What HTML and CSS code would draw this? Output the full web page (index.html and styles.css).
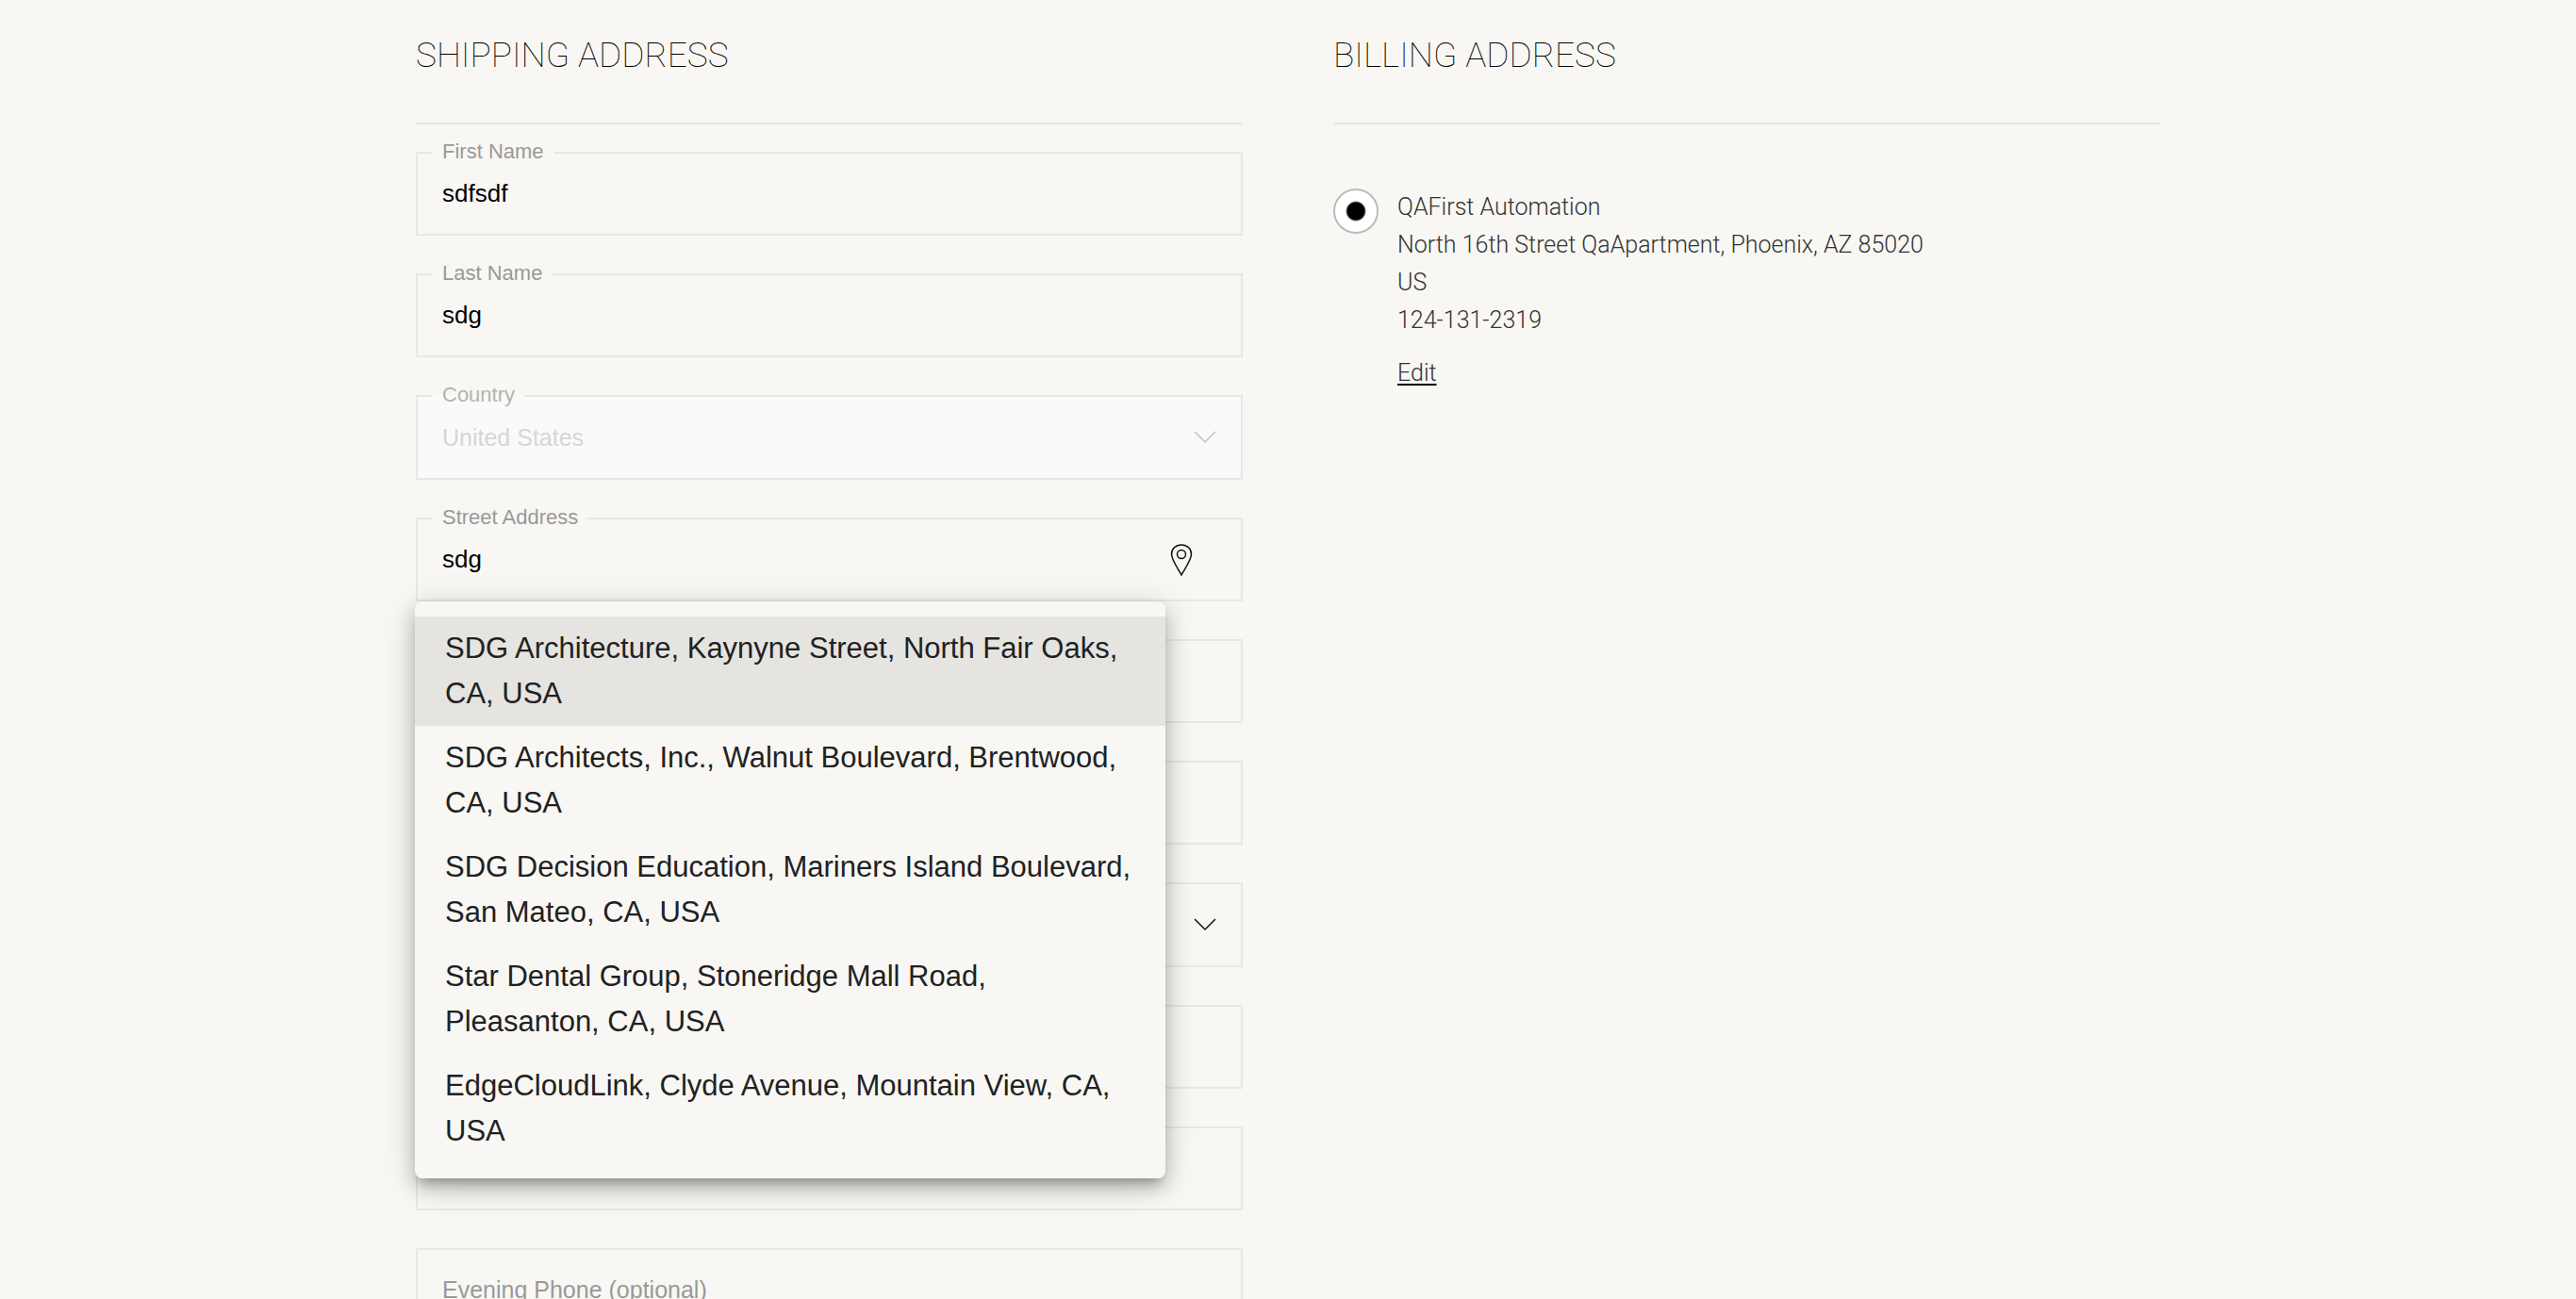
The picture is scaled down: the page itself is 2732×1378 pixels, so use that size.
FILE: index.html
```html
<!DOCTYPE html>
<html lang="en">
<head>
<meta charset="utf-8">
<meta name="viewport" content="width=device-width, initial-scale=1">
<title>Checkout addresses</title>
<link rel="stylesheet" href="styles.css">
</head>
<body>
<main class="checkout">
  <section class="column">
    <h2 class="section-title">SHIPPING ADDRESS</h2>
    <form class="form" autocomplete="off">
      <div class="field">
        <label class="field-label" for="first-name">First Name</label>
        <input class="control" id="first-name" type="text" value="sdfsdf">
      </div>
      <div class="field">
        <label class="field-label" for="last-name">Last Name</label>
        <input class="control" id="last-name" type="text" value="sdg">
      </div>
      <div class="field field-select field-disabled">
        <label class="field-label" for="country">Country</label>
        <select class="control" id="country" disabled><option>United States</option></select>
        <svg class="chevron" viewBox="0 0 24 14" aria-hidden="true"><path d="M1 1 L12 12 L23 1"/></svg>
      </div>
      <div class="field">
        <label class="field-label" for="street">Street Address</label>
        <input class="control" id="street" type="text" value="sdg">
        <svg class="pin" viewBox="0 0 24 34" aria-hidden="true"><path d="M12 33 C9 27 2 18 1.500 11 C1.500 5 6 1 12 1 C18 1 22.500 5 22.500 11 C22 18 15 27 12 33 Z"/><circle cx="12" cy="11" r="4.500"/></svg>
        <ul class="suggestions">
          <li><button class="suggestion active" type="button">SDG Architecture, Kaynyne Street, North Fair Oaks, CA, USA</button></li>
          <li><button class="suggestion" type="button">SDG Architects, Inc., Walnut Boulevard, Brentwood, CA, USA</button></li>
          <li><button class="suggestion" type="button">SDG Decision Education, Mariners Island Boulevard, San Mateo, CA, USA</button></li>
          <li><button class="suggestion" type="button">Star Dental Group, Stoneridge Mall Road, Pleasanton, CA, USA</button></li>
          <li><button class="suggestion" type="button">EdgeCloudLink, Clyde Avenue, Mountain View, CA, USA</button></li>
        </ul>
      </div>
      <div class="field"><input class="control" type="text" aria-label="Apartment"></div>
      <div class="field"><input class="control" type="text" aria-label="City"></div>
      <div class="field field-select">
        <select class="control" aria-label="State"><option></option></select>
        <svg class="chevron" viewBox="0 0 24 14" aria-hidden="true"><path d="M1 1 L12 12 L23 1"/></svg>
      </div>
      <div class="field"><input class="control" type="text" aria-label="Zip code"></div>
      <div class="field"><input class="control" type="tel" aria-label="Daytime phone"></div>
      <div class="field"><input class="control" type="tel" aria-label="Evening phone" placeholder="Evening Phone (optional)"></div>
    </form>
  </section>
  <section class="column">
    <h2 class="section-title">BILLING ADDRESS</h2>
    <div class="saved">
      <input class="radio" id="saved-address" type="radio" name="billing" checked>
      <div class="saved-text">
        <label for="saved-address">QAFirst Automation<br>North 16th Street QaApartment, Phoenix, AZ 85020<br>US<br>124-131-2319</label>
        <a class="edit" href="#">Edit</a>
      </div>
    </div>
  </section>
</main>
</body>
</html>
```
FILE: styles.css
```css
* { box-sizing: border-box; }

body {
  margin: 0;
  background: #f8f7f3;
  color: #212121;
  font: 400 25px/40px "Liberation Sans", Arial, sans-serif;
}

.checkout {
  display: grid;
  grid-template-columns: 1fr 1fr;
  gap: 96px;
  max-width: 1850px;
  margin: 0 auto;
}

.column { min-width: 0; }

.section-title {
  margin: 0;
  padding: 36px 0 48px;
  border-bottom: 2px solid #e6e6e6;
  color: #000;
  font: 100 37px/46px Roboto, sans-serif;
}

.form {
  display: flex;
  flex-direction: column;
  gap: 40px;
  padding: 29px 0 40px;
}

.field { position: relative; }

.control {
  display: block;
  width: 100%;
  height: 89px;
  margin: 0;
  padding: 0 26px;
  border: 2px solid #e7e7e9;
  border-radius: 0;
  outline: 0;
  background: transparent;
  color: #000;
  font: inherit;
  font-size: 26px;
  appearance: none;
}

.control::placeholder {
  color: #999;
  font-size: 25px;
  opacity: 1;
}

.field-select .control {
  height: 90px;
  font-size: 25px;
}

.field-label {
  position: absolute;
  top: -12px;
  left: 18px;
  padding: 0 10px;
  background: #f8f7f3;
  color: #999;
  font-size: 22px;
  line-height: 24px;
}

.field-disabled .field-label {
  color: #b3b3b0;
  background: linear-gradient(#f8f7f3 12px, #fafafa 12px);
}

.field-disabled .control {
  background: #fafafa;
  color: #d6d6d6;
  opacity: 1;
}

.chevron {
  position: absolute;
  top: 38px;
  right: 28px;
  width: 24px;
  height: 14px;
  fill: none;
  stroke: #111;
  stroke-width: 1.5;
  pointer-events: none;
}

.field-disabled .chevron { stroke: #c0c0c0; }

.pin {
  position: absolute;
  top: 28px;
  right: 53px;
  width: 24px;
  height: 34px;
  fill: none;
  stroke: #111;
  stroke-width: 1.5;
}

.suggestions {
  position: absolute;
  z-index: 2;
  top: 100%;
  left: -1px;
  width: 796px;
  max-width: 100%;
  margin: 0;
  padding: 16px 0;
  list-style: none;
  border-radius: 8px;
  background: #f8f7f3;
  box-shadow: 0 10px 10px -6px rgba(0, 0, 0, .2), 0 10px 20px rgba(0, 0, 0, .2), 0 6px 36px rgba(0, 0, 0, .16);
}

.suggestion {
  display: block;
  width: 100%;
  padding: 10px 32px;
  border: 0;
  background: transparent;
  color: #212121;
  font: 400 31px/48px "Liberation Sans", Arial, sans-serif;
  text-align: left;
}

.suggestion.active { background: #e5e4e0; }

.saved {
  display: flex;
  align-items: flex-start;
  gap: 20px;
  padding-top: 68px;
}

.radio {
  flex: none;
  width: 48px;
  height: 48px;
  margin: 0;
  border: 2px solid #bbb;
  border-radius: 50%;
  background: radial-gradient(circle, #000 9px, #fff 11px);
  appearance: none;
}

.saved-text {
  display: flex;
  flex-direction: column;
  align-items: flex-start;
  gap: 16px;
  color: #333;
  font: 300 25px/40px Roboto, sans-serif;
}

.edit {
  color: inherit;
  text-decoration: underline 2px #000;
  text-underline-offset: 3px;
  text-decoration-skip-ink: none;
}
```
